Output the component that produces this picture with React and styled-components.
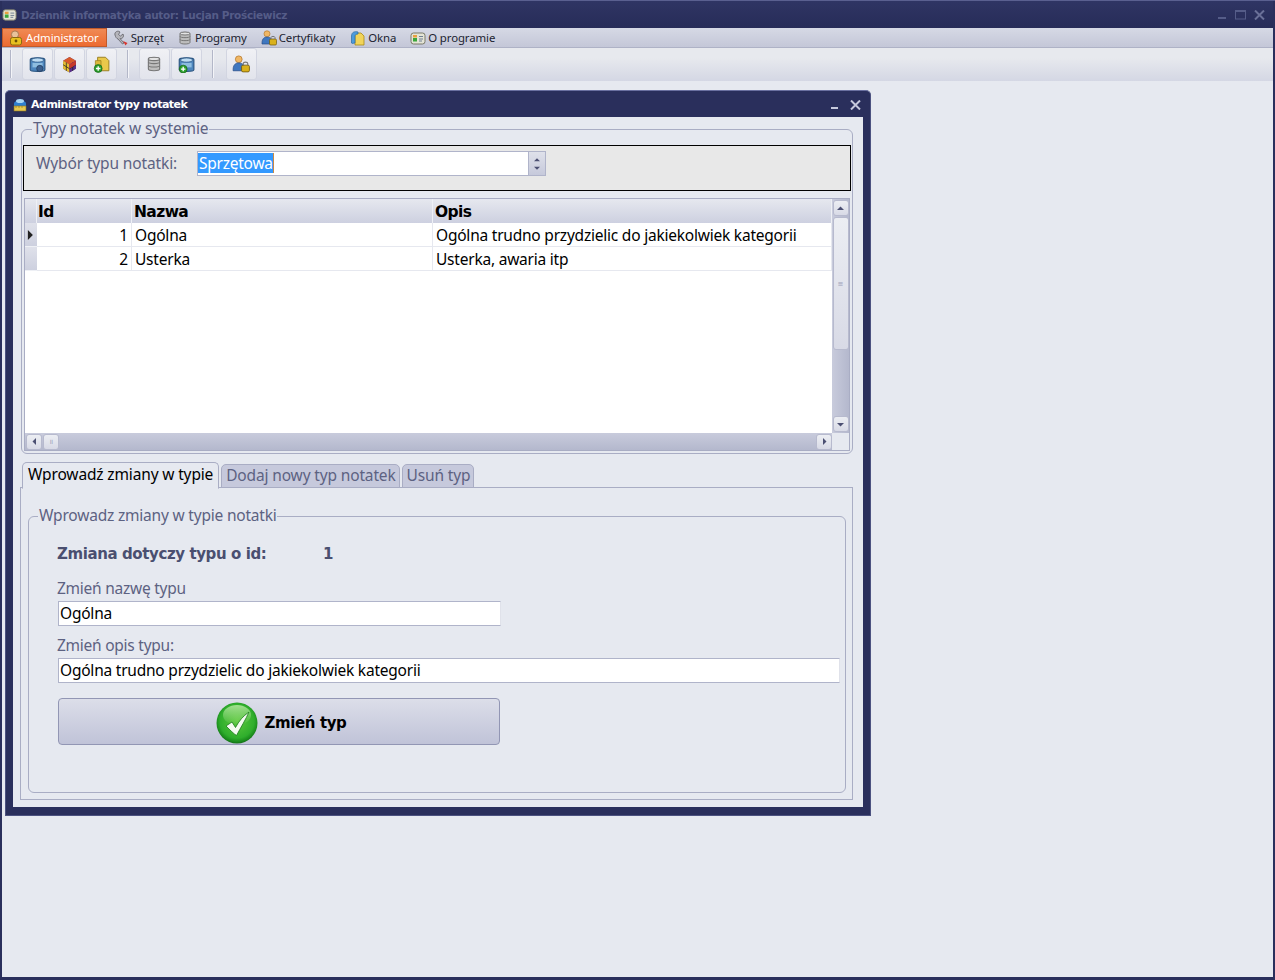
import React from "react";
import styled, { createGlobalStyle } from "styled-components";

const Global = createGlobalStyle`
  html, body { margin: 0; padding: 0; background: #e6e9f0; }
  #root { width: 1275px; height: 980px; overflow: hidden; }
  * { box-sizing: border-box; }
`;
const FONT = `"Noto Sans", "DejaVu Sans", sans-serif`;
const BOLD = `"DejaVu Sans", "Noto Sans", sans-serif`;

const Frame = styled.div`
  width: 1275px; height: 980px; display: flex; flex-direction: column;
  background: #2a2f5c; padding: 0 2px 3px 2px; font-family: ${FONT};
  border-top: 1px solid #5a6090;
`;
const TitleBar = styled.div`
  height: 27px; flex: none; display: flex; align-items: center; gap: 4px; padding: 0 8px 0 0;
  background: linear-gradient(#2f3564, #272c58);
`;
const AppTitle = styled.span`
  font: bold 10.5px ${BOLD}; color: #555c88; flex: 1; white-space: nowrap; letter-spacing: -0.33px;
`;
const WinButtons = styled.div`display: flex; gap: ${p => p.$gap}px; align-items: center;`;
const MenuBar = styled.div`
  height: 20px; flex: none; display: flex; align-items: stretch; padding-right: 1px;
  background: linear-gradient(#d6d9e5, #c4c7d8); border-bottom: 1px solid #aeb2c6;
`;
const MenuItem = styled.div`
  display: flex; align-items: center; gap: 2px; font-size: 11.4px; white-space: nowrap; letter-spacing: -0.1px;
  padding: 0 ${p => p.$pr}px 0 ${p => p.$pl}px;
  color: ${p => (p.$active ? "#fff" : "#1c1e30")};
  background: ${p => (p.$active ? "linear-gradient(#f08a55, #ec6a30)" : "transparent")};
  border: ${p => (p.$active ? "1px solid #c25a2a" : "none")};
`;
const Toolbar = styled.div`
  height: 33px; flex: none; display: flex; align-items: center; padding: 0 0 1px 8px;
  background: linear-gradient(#e7e9ee 0, #e7e9ee 30%, #d4d7e4 100%);
`;
const Separator = styled.div`
  width: 2px; height: 28px; background: #b3b7c8; border-right: 1px solid #f3f4f8; margin: 0 ${p => p.$mr}px 0 ${p => p.$ml}px;
`;
const ToolButton = styled.div`
  width: 31px; height: 32px; margin-right: 1px; border: 1px solid #d2d5e1; border-radius: 3px;
  background: linear-gradient(#f0f1f5, #e2e4ec); display: flex; align-items: center; justify-content: center;
  padding-right: 1px;
`;
const MdiArea = styled.div`
  flex: 1; background: #e6e9f0; padding: 9px 0 0 3px; border-bottom: 1px solid #e6e9f0;
`;
const ChildWindow = styled.div`
  width: 866px; height: 726px; display: flex; flex-direction: column; padding: 0 7px 8px 7px;
  background: #2a2f5c; border: 1px solid #4c5280; border-top-color: #6a70a0; border-radius: 5px 5px 0 0;
`;
const ChildTitle = styled.div`
  height: 26px; flex: none; display: flex; align-items: center; gap: 4px; padding: 1px 2px 0 0;
`;
const ChildTitleText = styled.span`font: bold 11px ${BOLD}; color: #fff; flex: 1; letter-spacing: -0.5px;`;
const ChildBody = styled.div`
  flex: 1; background: #e6e9f0; padding: 3px 10px 0 7px; display: flex; flex-direction: column;
`;
const Group = styled.fieldset`
  margin: 0; min-width: 0; border: 1px solid #a9adc4; border-radius: 6px;
  padding: ${p => p.$pad}; height: ${p => p.$h}px; flex: none; margin-left: ${p => p.$ml || 0}px;
`;
const Legend = styled.legend`
  padding: 0 0 0 1px; margin-left: ${p => p.$ml}px; font-size: 15.5px; line-height: 18px; color: #5d6282; letter-spacing: ${p => p.$ls}px;
  position: relative; top: -1px;
`;
const SelectPanel = styled.div`
  height: 46px; border: 1px solid #000; background: #e8e8e8; display: flex; align-items: flex-start; padding: 5px 0 0 12px;
`;
const SelectLabel = styled.span`
  width: 161px; font-size: 15.5px; line-height: 24px; color: #5d6282; flex: none; letter-spacing: -0.13px;
`;
const Combo = styled.div`
  width: 349px; height: 25px; display: flex; background: #fff; border: 1px solid #b0b4ca; align-items: center;
`;
const ComboText = styled.div`flex: 1; display: flex; padding-bottom: 2px;`;
const Selected = styled.span`background: #3399ff; color: #fff; font-size: 15.5px; line-height: 20px; padding: 0 0 0 1px; border-right: 1px solid #c98a44; letter-spacing: -0.25px;`;
const Spinner = styled.div`
  width: 17px; height: 100%; border-left: 1px solid #b0b4ca; background: linear-gradient(#dfe1ea, #c6c9db);
  display: flex; flex-direction: column; align-items: center; justify-content: center; gap: 2px;
`;
const GridBox = styled.div`
  margin: 7px 1px 0 1px; height: 253px; display: grid; grid-template-columns: 1fr 17px; grid-template-rows: 1fr 17px;
  border: 1px solid #a9adc4; background: #fff;
`;
const GridMain = styled.div`display: flex; flex-direction: column; min-width: 0; background: #fff;`;
const Row = styled.div`
  display: grid; grid-template-columns: 12px 95px 301px 1fr; height: ${p => p.$h}px; flex: none;
  background: ${p => (p.$head ? "linear-gradient(#e6e8ef, #cdd0e0)" : "#fff")};
`;
const HeadCell = styled.div`
  font: bold 15.5px ${BOLD}; line-height: 26px; color: #000; padding-left: ${p => p.$pl ?? 2}px; border-right: 1px solid #eef0f5; letter-spacing: -0.6px;
`;
const RowHead = styled.div`
  background: linear-gradient(#dfe1ea, #cdd0df); border-bottom: 1px solid #eef0f5; display: flex; align-items: center; justify-content: center; padding-right: 2px;
`;
const Cell = styled.div`
  font-size: 15.5px; line-height: 25px; color: #000; padding: 0 3px; white-space: nowrap; overflow: hidden; letter-spacing: -0.22px;
  border-right: 1px solid #e6e8ef; border-bottom: 1px solid #e6e8ef;
  text-align: ${p => (p.$num ? "right" : "left")};
`;
const VScroll = styled.div`
  background: linear-gradient(90deg, #c8cbdc, #b4b8cd); display: flex; flex-direction: column; align-items: center; padding: 1px 0;
`;
const HScroll = styled.div`
  background: linear-gradient(#c8cbdc, #b4b8cd); display: flex; align-items: center; padding: 0 0 0 1px;
`;
const Corner = styled.div`background: #e6e9f0;`;
const SBtn = styled.div`
  width: ${p => p.$w}px; height: ${p => p.$h}px; flex: none; border: 1px solid #b7bace; border-radius: 3px;
  background: linear-gradient(#eceef3, #d8dae6); display: flex; align-items: center; justify-content: center;
  margin-top: ${p => p.$mt || 0}px; margin-left: ${p => p.$ml || 0}px;
`;
const Grow = styled.div`flex: 1;`;
const Grip = styled.span`font-size: 7px; line-height: 7px; color: #9a9eb8;`;
const TabRow = styled.div`
  margin-top: 7px; height: 27px; display: flex; align-items: flex-end; gap: 2px; padding-left: 2px; flex: none; margin-bottom: -1px; position: relative; z-index: 1;
`;
const Tab = styled.div`
  height: ${p => (p.$active ? 27 : 24)}px; padding: ${p => (p.$active ? "0 5px 0 5px" : "0 3px 0 4px")}; font-size: 15.5px; line-height: ${p => (p.$active ? 23 : 20)}px; white-space: nowrap; letter-spacing: -0.15px;
  border: 1px solid #a9adc4; border-radius: 5px 5px 0 0;
  color: ${p => (p.$active ? "#000" : "#5d6282")};
  background: ${p => (p.$active ? "#e6e9f0" : "#c6c9dc")};
  border-bottom-color: ${p => (p.$active ? "#e6e9f0" : "#a9adc4")};
  margin-bottom: ${p => (p.$active ? -1 : 0)}px;
`;
const TabPanel = styled.div`
  height: 313px; border: 1px solid #a9adc4; padding: 19px 6px 0 7px; flex: none;
`;
const Form = styled.div`display: flex; flex-direction: column; align-items: flex-start; padding: 18px 0 0 28px;`;
const IdLine = styled.div`
  display: flex; font: bold 15px ${BOLD}; line-height: 22px; color: #4a4f70; letter-spacing: -0.4px;
`;
const IdLabel = styled.span`width: 266px;`;
const FieldLabel = styled.div`font-size: 15.5px; line-height: 22px; color: #5d6282; margin: ${p => p.$mt}px 0 2px; letter-spacing: -0.25px;`;
const Input = styled.div`
  width: ${p => p.$w}px; height: 25px; margin-left: 1px; background: #fff; border: 1px solid #b0b4ca; border-right-color: #e0e2ea;
  font-size: 15.5px; line-height: 23px; color: #000; padding-left: 1px; white-space: nowrap; letter-spacing: -0.22px;
`;
const BigButton = styled.div`
  width: 442px; height: 47px; margin: 15px 0 0 1px; border: 1px solid #9296b4; border-radius: 4px;
  background: linear-gradient(#dcdee9, #c0c3d8); display: flex; align-items: center; justify-content: center; gap: 7px; padding: 3px 0 0 4px;
`;
const BigButtonText = styled.span`font: bold 15px ${BOLD}; color: #000; letter-spacing: -0.4px;`;

const Svg = ({ s = 16, children }) => <svg width={s} height={s} viewBox="0 0 16 16">{children}</svg>;
const DbIcon = ({ s = 16 }) => (
  <Svg s={s}>
    <path d="M3 3.5C3 2 13 2 13 3.5V12.5C13 14.5 3 14.5 3 12.5Z" fill="#bdbdbd" stroke="#777" />
    <path d="M3 6.5C3 8 13 8 13 6.5M3 9.5C3 11 13 11 13 9.5" fill="none" stroke="#777" />
    <ellipse cx="8" cy="3.5" rx="5" ry="1.5" fill="#e4e4e4" stroke="#777" />
  </Svg>
);
const LockIcon = () => (
  <Svg>
    <circle cx="7" cy="4.5" r="3.6" fill="#e9c29a" stroke="#a87a52" />
    <rect x="2.5" y="7.5" width="11" height="7.5" rx="2" fill="#e8c020" stroke="#8a6a10" />
    <circle cx="8" cy="11" r="1.4" fill="#6a5208" />
  </Svg>
);
const WrenchIcon = () => (
  <Svg>
    <path d="M2 5C1 2 5 0 7 2L5.5 4.5 7.5 6 10 4C11.5 7 9 9 7 8.5L11 13 9.5 14 5 9C3.5 8.5 2.5 7 2 5Z" fill="#b5b5bb" stroke="#5f5f66" strokeWidth=".8" />
    <path d="M10 11L14.5 13 12.5 15.5Z" fill="#d8342c" />
  </Svg>
);
const UserLockIcon = ({ s = 16 }) => (
  <Svg s={s}>
    <circle cx="6" cy="3.8" r="3" fill="#f0b765" stroke="#b87b2c" strokeWidth=".7" />
    <path d="M1 13C1 8 4 7 6 7S11 8 11 12V14H1Z" fill="#3f77bf" stroke="#2a4f88" strokeWidth=".7" />
    <rect x="8.5" y="9" width="7" height="6" rx="1.3" fill="#d9b11c" stroke="#6e560b" strokeWidth=".7" />
    <path d="M10 9V7.5C10 6 14 6 14 7.5V9" fill="none" stroke="#777" />
  </Svg>
);
const FolderIcon = () => (
  <Svg>
    <path d="M5 3H11L14 6V15H5Z" fill="#f1d45a" stroke="#a98a18" strokeWidth=".8" />
    <path d="M1.5 6C1.5 2 5 1 8 2V4C6 4 5 5 5 6V13C3.5 13 2 14 1.5 13Z" fill="#4d9bdc" stroke="#2a6aa2" strokeWidth=".7" />
  </Svg>
);
const CardIcon = ({ s = 16 }) => (
  <Svg s={s}>
    <rect x="1" y="3" width="14" height="11" rx="2.5" fill="#e4e4d6" stroke="#7a7a68" />
    <rect x="3" y="5" width="4" height="2.5" fill="#e8a040" />
    <rect x="3" y="8" width="4" height="3.5" fill="#3aa63a" />
    <path d="M9 6.5H13M9 9H13M9 11H12" stroke="#6f7f92" />
  </Svg>
);
const ServerBlue = ({ plus }) => (
  <Svg s={18}>
    <path d="M2 4C2 2 15 2 15 4V13C15 15 2 15 2 13Z" fill="#4d86bd" stroke="#2b5580" />
    <ellipse cx="8.5" cy="4.5" rx="5.5" ry="1.8" fill="#bcdcf3" stroke="#2b5580" strokeWidth=".6" />
    <path d="M4 7H13V11H4Z" fill="#8dbde0" />
    {plus ? (
      <>
        <circle cx="5.5" cy="12.5" r="3.5" fill="#2ca02c" stroke="#146014" strokeWidth=".6" />
        <path d="M3.5 12.5H7.5M5.5 10.5V14.5" stroke="#fff" strokeWidth="1.2" />
      </>
    ) : (
      <circle cx="10.5" cy="12" r="2.8" fill="#3a5f8e" stroke="#233d60" strokeWidth=".7" />
    )}
  </Svg>
);
const RubikIcon = () => (
  <Svg s={17}>
    <path d="M8 1L14 4.5V12L8 15.5 2 12V4.5Z" fill="#5a3a8a" />
    <path d="M8 1L14 4.5 8 8 2 4.5Z" fill="#d85a2a" />
    <path d="M2 4.5L8 8V15.5L2 12Z" fill="#e8c030" />
    <path d="M8 8L14 4.5V12L8 15.5Z" fill="#5a2f8a" />
    <path d="M5 6.2V14M11 6.2V14M2 8.2L8 12 14 8.2" stroke="#222" strokeWidth=".7" fill="none" />
    <path d="M8 8L14 4.5V8.2L8 12Z" fill="#c8382a" />
  </Svg>
);
const FolderPlus = () => (
  <Svg s={18}>
    <path d="M5 2H12L15 5V14H5Z" fill="#e9c84a" stroke="#94791a" strokeWidth=".8" />
    <path d="M3 5H8V14H3Z" fill="#dcb93a" stroke="#94791a" strokeWidth=".6" />
    <circle cx="5.5" cy="12" r="3.5" fill="#2ca02c" stroke="#146014" strokeWidth=".6" />
    <path d="M3.5 12H7.5M5.5 10V14" stroke="#fff" strokeWidth="1.2" />
  </Svg>
);
const TitleNoteIcon = () => (
  <svg width="14" height="15" viewBox="0 0 14 15">
    <path d="M1 7C1 2 13 2 13 7V9H1Z" fill="#2f7fd0" />
    <ellipse cx="7" cy="4" rx="4" ry="2" fill="#a9d6f5" />
    <rect x="1" y="9" width="12" height="5" fill="#e8c850" stroke="#8a7420" strokeWidth=".6" />
    <path d="M3 9V11M6 9V11M9 9V11" stroke="#8a7420" strokeWidth=".6" />
  </svg>
);
const Arrow = ({ dir, c = "#4b4f72", s = 7 }) => {
  const pts = { up: "0,5 3.5,1.5 7,5", down: "0,2 7,2 3.5,5.5", left: "5,0 5,7 1.5,3.5", right: "2,0 2,7 5.5,3.5" }[dir];
  return <svg width={s} height={s} viewBox="0 0 7 7"><polygon points={pts} fill={c} /></svg>;
};
const Minimize = ({ c, w = 7 }) => <svg width={w + 1} height="10" viewBox={`0 0 ${w + 1} 10`}><rect x="0" y="7" width={w} height="2" fill={c} /></svg>;
const Maximize = ({ c }) => <svg width="11" height="10" viewBox="0 0 11 10"><rect x=".5" y=".5" width="10" height="8.5" fill="none" stroke={c} /><rect x="0" y="0" width="11" height="2" fill={c} /></svg>;
const Close = ({ c }) => <svg width="11" height="10" viewBox="0 0 11 10"><path d="M1 .5L10 9.5M10 .5L1 9.5" stroke={c} strokeWidth="2" /></svg>;
const Check = () => (
  <svg width="42" height="42" viewBox="0 0 42 42">
    <defs>
      <radialGradient id="chk" cx="50%" cy="45%" r="58%">
        <stop offset="0" stopColor="#5cc83c" />
        <stop offset=".72" stopColor="#2fae2c" />
        <stop offset=".88" stopColor="#1a8a1c" />
        <stop offset="1" stopColor="#0c5a10" />
      </radialGradient>
      <linearGradient id="gloss" x1="0" y1="0" x2="0" y2="1">
        <stop offset="0" stopColor="#c8f0b0" stopOpacity=".75" />
        <stop offset="1" stopColor="#c8f0b0" stopOpacity="0" />
      </linearGradient>
    </defs>
    <circle cx="21" cy="21" r="20.5" fill="url(#chk)" />
    <ellipse cx="21" cy="13" rx="14" ry="10" fill="url(#gloss)" />
    <path d="M10 24L16 20 19.5 25.5C23 19 27 14 33 10 30 17 25 25 20.5 33.5 18 32 14 28 10 24Z" fill="#f4fbf0" stroke="#1a7a1a" strokeWidth=".8" />
  </svg>
);

const menu = [
  { label: "Administrator", icon: <LockIcon />, active: true, pl: 5, pr: 7 },
  { label: "Sprzęt", icon: <WrenchIcon />, pl: 6, pr: 5 },
  { label: "Programy", icon: <DbIcon />, pl: 8, pr: 7 },
  { label: "Certyfikaty", icon: <UserLockIcon />, pl: 7, pr: 7 },
  { label: "Okna", icon: <FolderIcon />, pl: 8, pr: 7 },
  { label: "O programie", icon: <CardIcon />, pl: 7, pr: 7 },
];

export default function App() {
  return (
    <>
      <Global />
      <Frame>
        <TitleBar>
          <CardIcon s={15} />
          <AppTitle>Dziennik informatyka autor: Lucjan Prościewicz</AppTitle>
          <WinButtons $gap={8}>
            <Minimize c="#555c88" w={8} />
            <Maximize c="#555c88" />
            <Close c="#6a7098" />
          </WinButtons>
        </TitleBar>
        <MenuBar>
          {menu.map(m => (
            <MenuItem key={m.label} $active={m.active} $pl={m.pl} $pr={m.pr}>
              {m.icon}
              {m.label}
            </MenuItem>
          ))}
        </MenuBar>
        <Toolbar>
          <Separator $ml={0} $mr={10} />
          <ToolButton><ServerBlue /></ToolButton>
          <ToolButton><RubikIcon /></ToolButton>
          <ToolButton><FolderPlus /></ToolButton>
          <Separator $ml={9} $mr={10} />
          <ToolButton><DbIcon s={18} /></ToolButton>
          <ToolButton><ServerBlue plus /></ToolButton>
          <Separator $ml={9} $mr={12} />
          <ToolButton><UserLockIcon s={18} /></ToolButton>
        </Toolbar>
        <MdiArea>
          <ChildWindow>
            <ChildTitle>
              <TitleNoteIcon />
              <ChildTitleText>Administrator typy notatek</ChildTitleText>
              <WinButtons $gap={11}>
                <Minimize c="#c6c9dc" />
                <Close c="#c6c9dc" />
              </WinButtons>
            </ChildTitle>
            <ChildBody>
              <Group $h={334} $ml={1} $pad="7px 1px 1px 1px">
                <Legend $ml={9} $ls={-0.1}>Typy notatek w systemie</Legend>
                <SelectPanel>
                  <SelectLabel>Wybór typu notatki:</SelectLabel>
                  <Combo>
                    <ComboText><Selected>Sprzętowa</Selected></ComboText>
                    <Spinner>
                      <Arrow dir="up" s={6} />
                      <Arrow dir="down" s={6} />
                    </Spinner>
                  </Combo>
                </SelectPanel>
                <GridBox>
                  <GridMain>
                    <Row $head $h={24}>
                      <HeadCell />
                      <HeadCell $pl={1}>Id</HeadCell>
                      <HeadCell>Nazwa</HeadCell>
                      <HeadCell>Opis</HeadCell>
                    </Row>
                    <Row $h={24}>
                      <RowHead><Arrow dir="right" c="#222" s={10} /></RowHead>
                      <Cell $num>1</Cell>
                      <Cell>Ogólna</Cell>
                      <Cell>Ogólna trudno przydzielic do jakiekolwiek kategorii</Cell>
                    </Row>
                    <Row $h={24}>
                      <RowHead />
                      <Cell $num>2</Cell>
                      <Cell>Usterka</Cell>
                      <Cell>Usterka, awaria itp</Cell>
                    </Row>
                  </GridMain>
                  <VScroll>
                    <SBtn $w={16} $h={16}><Arrow dir="up" /></SBtn>
                    <SBtn $w={16} $h={133} $mt={1}><Grip>≡</Grip></SBtn>
                    <Grow />
                    <SBtn $w={16} $h={16}><Arrow dir="down" /></SBtn>
                  </VScroll>
                  <HScroll>
                    <SBtn $w={16} $h={16}><Arrow dir="left" /></SBtn>
                    <SBtn $w={16} $h={16} $ml={1}><Grip>॥</Grip></SBtn>
                    <Grow />
                    <SBtn $w={16} $h={16}><Arrow dir="right" /></SBtn>
                  </HScroll>
                  <Corner />
                </GridBox>
              </Group>
              <TabRow>
                <Tab $active>Wprowadź zmiany w typie</Tab>
                <Tab>Dodaj nowy typ notatek</Tab>
                <Tab>Usuń typ</Tab>
              </TabRow>
              <TabPanel>
                <Group $h={286} $pad="0">
                  <Legend $ml={9} $ls={-0.2}>Wprowadz zmiany w typie notatki</Legend>
                  <Form>
                    <IdLine><IdLabel>Zmiana dotyczy typu o id:</IdLabel><span>1</span></IdLine>
                    <FieldLabel $mt={12}>Zmień nazwę typu</FieldLabel>
                    <Input $w={443}>Ogólna</Input>
                    <FieldLabel $mt={8}>Zmień opis typu:</FieldLabel>
                    <Input $w={782}>Ogólna trudno przydzielic do jakiekolwiek kategorii</Input>
                    <BigButton>
                      <Check />
                      <BigButtonText>Zmień typ</BigButtonText>
                    </BigButton>
                  </Form>
                </Group>
              </TabPanel>
            </ChildBody>
          </ChildWindow>
        </MdiArea>
      </Frame>
    </>
  );
}
